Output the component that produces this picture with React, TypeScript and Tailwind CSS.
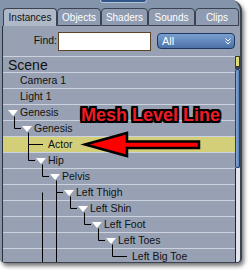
import React from 'react';

type Node = { label: string; level: number; open?: boolean; selected?: boolean };

const tabs = [
  { label: 'Instances', w: 'w-[54px]', active: true },
  { label: 'Objects', w: 'w-[44px]' },
  { label: 'Shaders', w: 'w-[47px]' },
  { label: 'Sounds', w: 'w-[47px]' },
  { label: 'Clips', w: 'w-[44px]' },
];

const nodes: Node[] = [
  { label: 'Camera 1', level: 0 },
  { label: 'Light 1', level: 0 },
  { label: 'Genesis', level: 0, open: true },
  { label: 'Genesis', level: 1, open: true },
  { label: 'Actor', level: 2, selected: true },
  { label: 'Hip', level: 2, open: true },
  { label: 'Pelvis', level: 3, open: true },
  { label: 'Left Thigh', level: 4, open: true },
  { label: 'Left Shin', level: 5, open: true },
  { label: 'Left Foot', level: 6, open: true },
  { label: 'Left Toes', level: 7, open: true },
  { label: 'Left Big Toe', level: 8 },
];

// page coords of tree connector lines (rows are 16px, first row centre at y=80)
const rowY = (i: number) => 80 + i * 16 + 0.5;
const connectors: string[] = [];
nodes.forEach((n, i) => {
  if (n.level === 0) return;
  let p = i - 1;
  while (nodes[p].level >= n.level) p--;
  const x = n.level * 14 + 0.5;
  const yTop = p === i - 1 ? rowY(p) + 4 : rowY(i - 1);
  const xEnd = n.open ? 7 + n.level * 14 : 15 + n.level * 14;
  connectors.push(`M${x} ${yTop}V${rowY(i)}H${xEnd}`);
});
// Hip and Pelvis have more children below the visible part
connectors.push(`M42.5 ${rowY(7)}V262`, `M56.5 ${rowY(7)}V262`);

function Triangle() {
  return (
    <svg width="10" height="6" viewBox="0 0 10 6" className="mr-[2px] shrink-0">
      <polygon points="0,0 10,0 5,6" fill="#fff" />
    </svg>
  );
}

export default function App() {
  return (
    <div className="relative w-[251px] h-[275px] bg-white overflow-hidden font-['Liberation_Sans',Arial,sans-serif]">
      <div className="flex flex-col w-[242px] h-[263px] bg-[#8494aa] rounded-tr-[11px] rounded-b-[5px] border-r-2 border-b border-[#3b4352] shadow-[2px_3px_4px_rgba(0,0,0,0.55)] overflow-hidden pt-[8px]">
        {/* Tabs */}
        <div className="flex h-[18px] pl-[3px]">
          {tabs.map((t) => (
            <div
              key={t.label}
              className={
                'flex items-center justify-center rounded-t-[4px] border border-[#3a4252] text-[10px] ' +
                t.w +
                (t.active ? ' bg-[#aeb8c7] text-[#111] border-b-0' : ' bg-[#8e9bb0] text-white')
              }
            >
              {t.label}
            </div>
          ))}
        </div>

        <div className="flex flex-1 min-h-0 pl-[2px]">
          {/* Main list */}
          <div className="w-[233px] border-l border-[#2a2f38] bg-[#97a1b3] flex flex-col overflow-hidden">
            <div className="flex items-center h-[30px] shrink-0">
              <span className="w-[54px] text-right text-[10.5px] text-[#111]">Find:</span>
              <div className="ml-[1px] w-[93px] h-[19px] bg-white border border-[#5e4226]" />
              <div className="ml-[6px] w-[78px] h-[16px] rounded-[4px] border border-[#1e3763] bg-gradient-to-b from-[#7b9fd0] to-[#4c72a8] flex items-center pl-[4px] pr-[3px]">
                <span className="flex-1 text-[11px] text-white leading-none">All</span>
                <svg width="6" height="7" viewBox="0 0 6 7">
                  <path d="M0.5 0.5L3 3L5.5 0.5M0.5 3.5L3 6L5.5 3.5" stroke="#fff" strokeWidth="1" fill="none" />
                </svg>
              </div>
            </div>
            <div className="h-px shrink-0 bg-[#ccd3de]" />
            <div className="h-[15px] shrink-0 flex items-center pl-[5px] text-[14px] text-[#111] leading-none">Scene</div>
            {nodes.map((n, i) => (
              <div
                key={i}
                className={
                  'h-[16px] shrink-0 border-t border-[#ccd3de] flex items-center text-[10.5px] text-[#111] leading-none' +
                  (n.selected ? ' bg-[#d3cf79]' : '')
                }
                style={{ paddingLeft: (n.open ? 5 : 17) + n.level * 14 }}
              >
                {n.open && <Triangle />}
                <span>{n.label}</span>
              </div>
            ))}
          </div>

          {/* Scrollbar */}
          <div className="w-[5px] flex flex-col">
            <div className="h-[30px] bg-[#97a1b3]" />
            <div className="h-[11px] bg-[#e0da7a] border border-[#3a3a22]" />
            <div className="h-[2px] bg-[#3a4252]" />
            <div className="h-[99px] rounded-[2px] bg-gradient-to-r from-[#86a8d6] to-[#5a7fb5] border border-[#22406e]" />
            <div className="flex-1 bg-[#e2e6ec] border-l border-[#222]" />
          </div>
        </div>
      </div>

      {/* little blue handle on top edge */}
      <div className="absolute left-[100px] top-0 w-[47px] h-[3px] bg-[#2f5588] border border-t-0 border-[#b3c3da] rounded-b-[3px]" />

      {/* tree connector lines */}
      <svg className="absolute inset-0 pointer-events-none" width="251" height="275">
        {connectors.map((d, i) => (
          <path key={i} d={d} stroke="#000" strokeWidth="1" fill="none" />
        ))}
        <polygon
          points="85,144.5 127,133 127,141.5 199,141.5 199,148 127,148 127,156"
          fill="#ff0000"
          stroke="#000"
          strokeWidth="2.5"
          strokeLinejoin="miter"
        />
      </svg>

      {/* annotation */}
      <div className="absolute left-[81px] top-[106px] text-[18px] font-bold leading-none text-[#ee1c25] whitespace-nowrap [text-shadow:-2px_-2px_0_#000,2px_-2px_0_#000,-2px_2px_0_#000,2px_2px_0_#000,0_-2px_0_#000,0_2px_0_#000,-2px_0_0_#000,2px_0_0_#000]">
        Mesh Level Line
      </div>
    </div>
  );
}
